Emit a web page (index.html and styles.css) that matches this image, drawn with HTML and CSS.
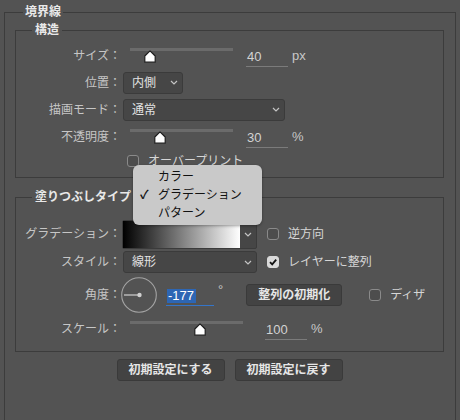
FILE: index.html
```html
<!DOCTYPE html>
<html lang="ja">
<head>
    <meta charset="UTF-8">
    <title>境界線</title>
    <link rel="stylesheet" href="styles.css">
</head>
<body>
<fieldset class="group outer">
    <legend>境界線</legend>

    <fieldset class="group">
        <legend>構造</legend>
        <div class="row">
            <span class="label">サイズ：</span>
            <div class="slider"><span class="thumb" style="left:20px"><svg width="12" height="13" viewBox="0 0 12 13"><path d="M6 0.8 L11.2 6 V12.2 H0.8 V6 Z" fill="#fff" stroke="#1e1e1e" stroke-width="1.2" stroke-linejoin="round"/></svg></span></div>
            <span class="num">40</span>
            <span class="unit">px</span>
        </div>
        <div class="row">
            <span class="label">位置：</span>
            <div class="select w-pos"><span>内側</span><svg width="8" height="5" viewBox="0 0 8 5"><path d="M1 1 L4 4 L7 1" fill="none" stroke="#c4c4c4" stroke-width="1.2"/></svg></div>
        </div>
        <div class="row">
            <span class="label">描画モード：</span>
            <div class="select w-mode"><span>通常</span><svg width="8" height="5" viewBox="0 0 8 5"><path d="M1 1 L4 4 L7 1" fill="none" stroke="#c4c4c4" stroke-width="1.2"/></svg></div>
        </div>
        <div class="row">
            <span class="label">不透明度：</span>
            <div class="slider"><span class="thumb" style="left:30px"><svg width="12" height="13" viewBox="0 0 12 13"><path d="M6 0.8 L11.2 6 V12.2 H0.8 V6 Z" fill="#fff" stroke="#1e1e1e" stroke-width="1.2" stroke-linejoin="round"/></svg></span></div>
            <span class="num">30</span>
            <span class="unit">%</span>
        </div>
        <div class="row short">
            <span class="label"></span>
            <span class="check indent"></span>
            <span class="check-label">オーバープリント</span>
        </div>
    </fieldset>

    <fieldset class="group fill">
        <legend>塗りつぶしタイプ</legend>
        <div class="row r-grad">
            <span class="label">グラデーション：</span>
            <div class="gradient">
                <div class="ramp"></div>
                <div class="arrow"><svg width="8" height="5" viewBox="0 0 8 5"><path d="M1 1 L4 4 L7 1" fill="none" stroke="#c4c4c4" stroke-width="1.2"/></svg></div>
            </div>
            <span class="check gap"></span>
            <span class="check-label">逆方向</span>
        </div>
        <div class="row r-style">
            <span class="label">スタイル：</span>
            <div class="select w-style"><span>線形</span><svg width="8" height="5" viewBox="0 0 8 5"><path d="M1 1 L4 4 L7 1" fill="none" stroke="#c4c4c4" stroke-width="1.2"/></svg></div>
            <span class="check on gap"><svg width="10" height="10" viewBox="0 0 10 10"><path d="M2 5.2 L4.2 7.4 L8.2 2.6" fill="none" stroke="#111" stroke-width="1.8"/></svg></span>
            <span class="check-label">レイヤーに整列</span>
        </div>
        <div class="row r-angle">
            <span class="label">角度：</span>
            <svg class="dial" width="36" height="36" viewBox="0 0 36 36">
                <circle cx="18" cy="18" r="17.3" fill="none" stroke="#a3a3a3" stroke-width="1.1"/>
                <line x1="3" y1="18" x2="18" y2="18" stroke="#d0d0d0" stroke-width="1.2"/>
                <circle cx="18.5" cy="18" r="2.2" fill="#d0d0d0"/>
            </svg>
            <span class="num angle"><span class="sel">-177</span></span>
            <span class="deg">°</span>
            <span class="btn b-reset">整列の初期化</span>
            <span class="check dither"></span>
            <span class="check-label">ディザ</span>
        </div>
        <div class="row r-scale">
            <span class="label">スケール：</span>
            <div class="slider wide"><span class="thumb" style="left:70px"><svg width="12" height="13" viewBox="0 0 12 13"><path d="M6 0.8 L11.2 6 V12.2 H0.8 V6 Z" fill="#fff" stroke="#1e1e1e" stroke-width="1.2" stroke-linejoin="round"/></svg></span></div>
            <span class="num far">100</span>
            <span class="unit">%</span>
        </div>
    </fieldset>

    <div class="buttons">
        <span class="btn b-wide">初期設定にする</span>
        <span class="btn b-wide">初期設定に戻す</span>
    </div>
</fieldset>

<div class="menu">
    <div class="item">カラー</div>
    <div class="item checked">グラデーション</div>
    <div class="item">パターン</div>
</div>
</body>
</html>
```

FILE: styles.css
```css
*{
    margin: 0;
    padding: 0;
    box-sizing: border-box;
}
body{
    width: 460px;
    height: 420px;
    overflow: hidden;
    position: relative;
    background: #535353;
    color: #c6c6c6;
    font-family: "Liberation Sans", "Noto Sans CJK JP", sans-serif;
    font-size: 12px;
    line-height: 14px;
}
.group{
    border: 1px solid #3c3c3c;
    min-width: 0;
}
.group legend{
    margin-left: 16px;
    padding: 0 3px;
    line-height: 14px;
    color: #e8e8e8;
    font-weight: bold;
}
/* outer frame runs on past the bottom of the window */
.outer{
    margin: 5px 4px 0;
    padding: 4px 11px 40px 10px;
    border-bottom: 0;
}
.outer > legend{
    margin-left: 8px;
    padding: 0 2px;
}
.group .group{
    padding: 5px 0 5px 0;
}
.group .fill{
    margin-top: 12px;
    padding: 15px 0 9px 0;
}

/* rows */
.row{
    display: flex;
    align-items: center;
    height: 27px;
}
.row.short{ height: 22px; }
.r-grad{ height: 30px; }
.r-style{ height: 26px; }
.r-angle{ height: 40px; }
.label{
    flex: none;
    width: 107px;
    padding-right: 2px;
    text-align: right;
    white-space: nowrap;
}

/* slider */
.slider{
    flex: none;
    position: relative;
    width: 103px;
    height: 16px;
    margin-left: 7px;
}
.slider.wide{ width: 113px; }
.slider::before{
    content: "";
    position: absolute;
    left: 0;
    right: 0;
    top: 0;
    height: 3px;
    background: #6b6b6b;
}
.thumb{
    position: absolute;
    top: 2px;
    width: 12px;
    height: 13px;
    margin-left: -6px;
}
.thumb svg{ display: block; }

/* number fields */
.num{
    flex: none;
    width: 42px;
    height: 19px;
    margin-left: 13px;
    margin-top: 4px;
    padding: 2px 0 0 1px;
    border-bottom: 1px solid #7b7b7b;
    color: #d2d2d2;
    font-size: 13px;
    line-height: 14px;
}
.num.far{ margin-left: 22px; }
.num.angle{
    width: 48px;
    margin-left: 9px;
    margin-top: 2px;
    border-bottom-color: #3475c9;
}
.sel{
    display: inline-block;
    padding: 0 2px 0 1px;
    background: #2d66b4;
    color: #fff;
}
.unit{
    margin-left: 4px;
    color: #c8c8c8;
    font-size: 13px;
}
.deg{
    align-self: flex-start;
    margin-top: 8px;
    margin-left: 4px;
    font-size: 13px;
    color: #c8c8c8;
}

/* selects */
.select{
    flex: none;
    display: flex;
    align-items: center;
    justify-content: space-between;
    height: 22px;
    padding: 0 4px 0 8px;
    background: #464646;
    border: 1px solid #3b3b3b;
    border-radius: 3px;
    color: #e2e2e2;
}
.select svg{ display: block; }
.w-pos{ width: 60px; }
.w-mode{ width: 162px; }
.w-style{ width: 134px; }

.gradient{
    flex: none;
    display: flex;
    width: 135px;
    height: 29px;
    margin-left: -1px;
    background: #464646;
    border: 1px solid #3b3b3b;
    border-radius: 2px;
}
.ramp{
    flex: 1;
    background: linear-gradient(to right, #000, #fff);
}
.arrow{
    width: 16px;
    display: flex;
    align-items: center;
    justify-content: center;
}

/* checkboxes */
.check{
    flex: none;
    display: flex;
    align-items: center;
    justify-content: center;
    width: 12px;
    height: 12px;
    border: 1px solid #8a8a8a;
    border-radius: 3px;
    background: #4d4d4d;
}
.check.on{
    background: #dadada;
    border-color: #dadada;
}
.check.indent{ margin-left: 4px; }
.check.gap{ margin-left: 10px; }
.check.dither{ margin-left: 27px; }
.check-label{
    margin-left: 9px;
    color: #d6d6d6;
    white-space: nowrap;
}

.dial{
    flex: none;
    margin-left: -2px;
    display: block;
}

/* buttons */
.btn{
    flex: none;
    display: flex;
    align-items: center;
    justify-content: center;
    height: 22px;
    background: #434343;
    border: 1px solid #3a3a3a;
    border-radius: 3px;
    color: #e6e6e6;
    font-weight: bold;
}
.b-reset{
    width: 96px;
    margin-left: 23px;
}
.b-wide{ width: 108px; }
.buttons{
    display: flex;
    justify-content: center;
    gap: 10px;
    margin-top: 7px;
}

/* popup menu */
.menu{
    position: absolute;
    left: 133px;
    top: 165px;
    width: 129px;
    height: 60px;
    padding-top: 3px;
    background: #c9c9c9;
    border-radius: 6px;
    box-shadow: 0 1px 3px rgba(0,0,0,0.35);
    z-index: 2;
}
.item{
    position: relative;
    height: 18px;
    line-height: 18px;
    padding-left: 25px;
    color: #111;
}
.item.checked::before{
    content: "✓";
    position: absolute;
    left: 7px;
    top: 0;
    font-weight: bold;
}
```
